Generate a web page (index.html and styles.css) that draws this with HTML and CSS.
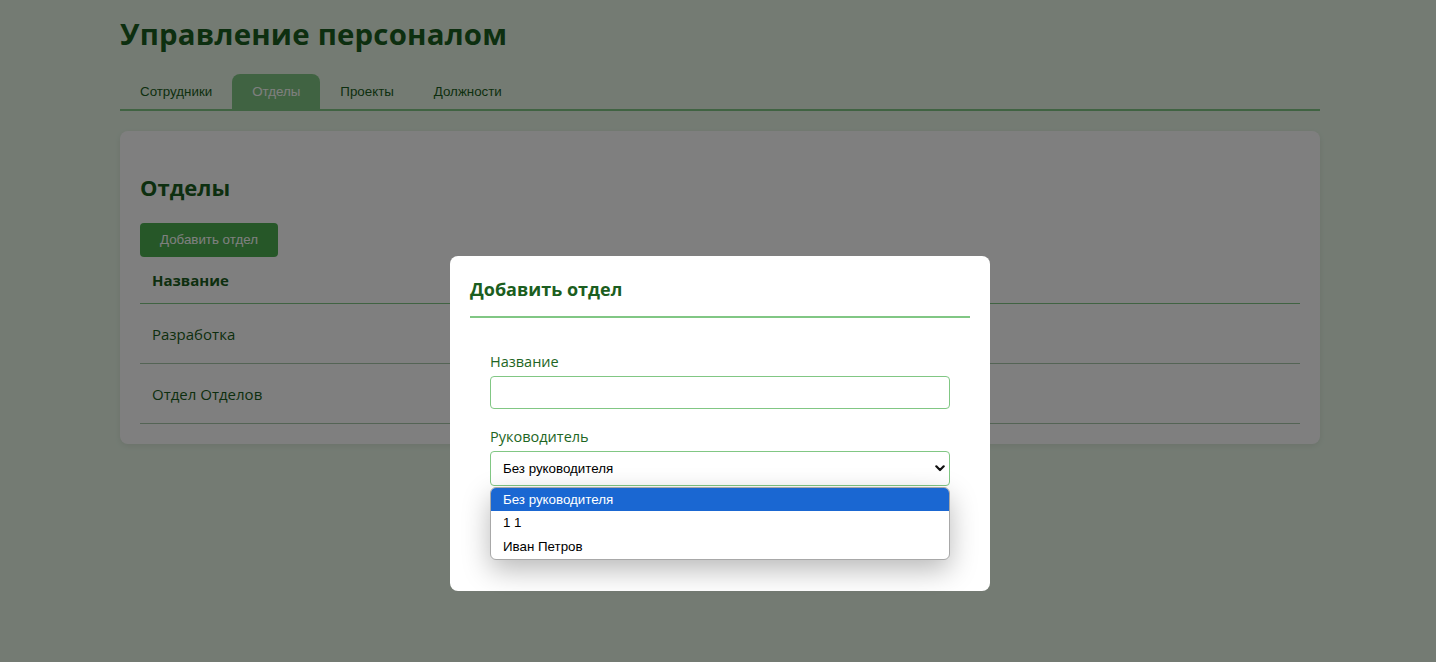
FILE: index.html
```html
<!DOCTYPE html>
<html lang="ru">
<head>
<meta charset="utf-8">
<title>Управление персоналом</title>
<link rel="stylesheet" href="styles.css">
</head>
<body>
<div class="container">
  <h1 class="title">Управление персоналом</h1>
  <nav class="tabs">
    <button class="tab">Сотрудники</button>
    <button class="tab active">Отделы</button>
    <button class="tab">Проекты</button>
    <button class="tab">Должности</button>
  </nav>
  <section class="card">
    <h2 class="card-title">Отделы</h2>
    <button class="btn">Добавить отдел</button>
    <table class="table">
      <thead>
        <tr><th>Название</th></tr>
      </thead>
      <tbody>
        <tr><td>Разработка</td></tr>
        <tr><td>Отдел Отделов</td></tr>
      </tbody>
    </table>
  </section>
</div>

<div class="overlay">
  <div class="modal">
    <h3 class="modal-title">Добавить отдел</h3>
    <form class="form">
      <div class="group">
        <label class="label">Название</label>
        <input class="input" type="text">
      </div>
      <div class="group select-group">
        <label class="label">Руководитель</label>
        <div class="select">
          <span>Без руководителя</span>
          <svg class="chev" width="10" height="7" viewBox="0 0 10 7"><polyline points="1.3,1.3 5,5 8.7,1.3" fill="none" stroke="#111" stroke-width="2.2" stroke-linecap="round" stroke-linejoin="round"/></svg>
        </div>
        <ul class="dropdown">
          <li class="opt selected">Без руководителя</li>
          <li class="opt">1 1</li>
          <li class="opt">Иван Петров</li>
        </ul>
      </div>
      <button type="button" class="btn submit">Сохранить</button>
    </form>
  </div>
</div>
</body>
</html>
```
FILE: styles.css
```css
* { box-sizing: border-box; }
html, body { margin: 0; }
body {
  background: #e8f7e7;
  font-family: "Open Sans", "Noto Sans", sans-serif;
  color: #2e7d32;
  padding-left: 4px;
  height: 662px;
  overflow: hidden;
}
.container {
  width: 1200px;
  margin: 0 auto;
  padding-top: 10px;
}
.title {
  margin: 0 0 16px;
  font-size: 29.4px;
  line-height: 48px;
  font-weight: 700;
  color: #1b5e20;
  letter-spacing: 0.2px;
}
.tabs {
  display: flex;
  border-bottom: 2px solid #81c784;
  margin-bottom: 20px;
}
.tab {
  font-family: "Liberation Sans", Arial, sans-serif;
  font-size: 13.33px;
  line-height: 15px;
  padding: 10px 20px;
  border: 0;
  background: transparent;
  color: #1b5e20;
  border-radius: 8px 8px 0 0;
}
.tab.active {
  background: #81c784;
  color: #ffffff;
}
.card {
  background: #ffffff;
  border-radius: 8px;
  padding: 20px 20px 20px;
  box-shadow: 0 2px 6px rgba(0,0,0,0.08);
}
.card-title {
  font-size: 22px;
  line-height: 30px;
  margin: 21px 0 21px;
  color: #1b5e20;
  font-weight: 700;
}
.btn {
  font-family: "Liberation Sans", Arial, sans-serif;
  font-size: 13.33px;
  line-height: 14px;
  padding: 10px 20px;
  border: 0;
  border-radius: 4px;
  background: #4caf50;
  color: #ffffff;
}
.table {
  width: 100%;
  border-collapse: collapse;
  font-size: 15px;
}
.table th {
  text-align: left;
  font-weight: 700;
  color: #1b5e20;
  padding: 12px 12px 12px;
  line-height: 22px;
  border-bottom: 1px solid #81c784;
}
.table td {
  padding: 19px 12px 18px;
  line-height: 22px;
  border-bottom: 1px solid #a9c9aa;
  color: #1b5e20;
}
.overlay {
  position: fixed;
  inset: 0;
  background: rgba(0,0,0,0.5);
  display: flex;
  justify-content: center;
  align-items: flex-start;
  padding-top: 256px;
  padding-left: 4px;
}
.modal {
  width: 540px;
  background: #ffffff;
  border-radius: 8px;
  padding: 20px 20px 30px;
}
.modal-title {
  margin: 0;
  font-size: 18px;
  line-height: 26px;
  font-weight: 700;
  color: #1b5e20;
  padding: 0 0 14px;
  border-bottom: 2px solid #81c784;
}
.form {
  padding: 33px 20px 15px;
}
.group { margin-bottom: 17px; }
.label {
  display: block;
  font-size: 14.5px;
  line-height: 21px;
  margin-bottom: 4px;
  color: #1e6624;
}
.input {
  display: block;
  width: 100%;
  height: 33px;
  border: 1px solid #81c784;
  border-radius: 4px;
  font-family: "Liberation Sans", Arial, sans-serif;
  font-size: 13.33px;
}
.select-group { position: relative; margin-bottom: 20px; }
.select {
  height: 35px;
  border: 1px solid #81c784;
  border-radius: 4px;
  display: flex;
  align-items: center;
  justify-content: space-between;
  padding: 0 4px 0 12px;
  font-family: "Liberation Sans", Arial, sans-serif;
  font-size: 13.33px;
  color: #000;
}
.chev { display: block; }
.dropdown {
  position: absolute;
  left: 0;
  right: 0;
  top: 100%;
  margin: 1px 0 0;
  padding: 0;
  list-style: none;
  background: #fff;
  border: 1px solid #a8a8a8;
  border-radius: 6px;
  overflow: hidden;
  box-shadow: 0 10px 28px rgba(0,0,0,0.28);
  font-family: "Liberation Sans", Arial, sans-serif;
  font-size: 13.33px;
  color: #000;
  z-index: 2;
}
.opt {
  height: 24px;
  line-height: 23px;
  padding-left: 12px;
}
.opt.selected {
  background: #1a67d2;
  color: #fff;
  height: 23px;
  line-height: 23px;
}
.submit {
  display: block;
  width: 100%;
  height: 40px;
  font-size: 14px;
}
```
